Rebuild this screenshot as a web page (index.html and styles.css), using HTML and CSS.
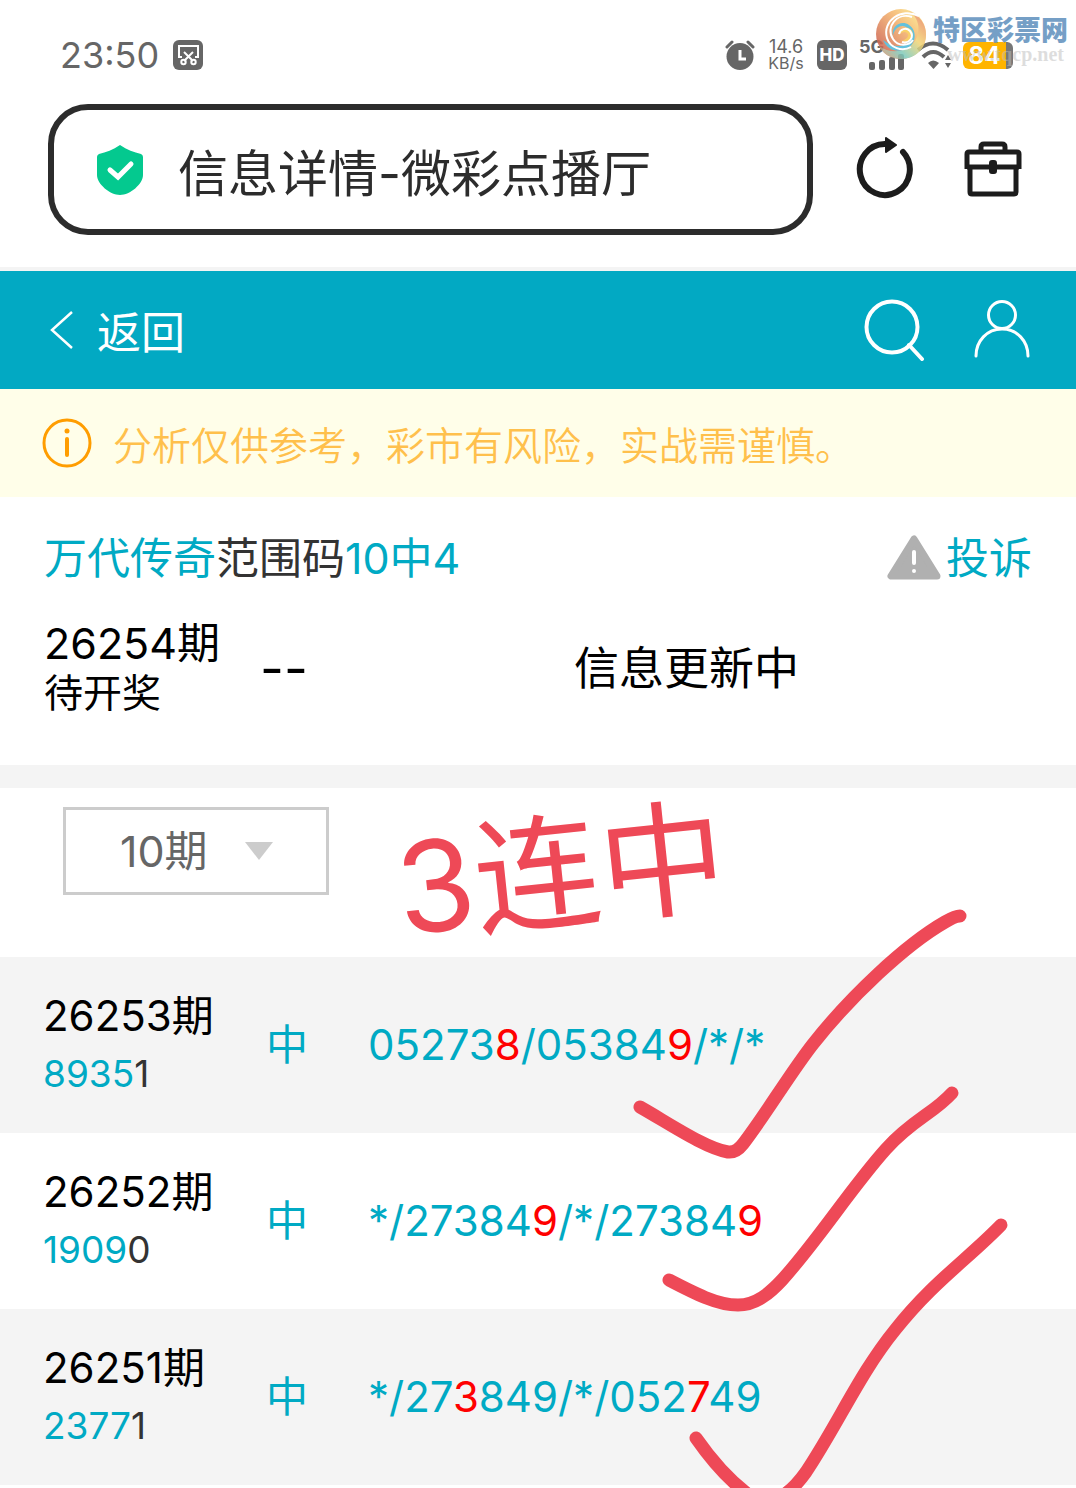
FILE: index.html
```html
<!DOCTYPE html>
<html lang="zh-CN">
<head>
    <meta charset="UTF-8">
    <meta name="viewport" content="width=device-width, initial-scale=1">
    <title>信息详情-微彩点播厅</title>
    <link rel="stylesheet" href="styles.css">
</head>
<body>
<div class="status">
    <span class="time">23:50</span>
    <svg class="cut" width="30" height="30" viewBox="0 0 30 30" fill="none" stroke="#fff" stroke-width="2">
        <rect width="30" height="30" rx="6" fill="#666" stroke="none"/>
        <path d="M9 17H6V6h19v11h-3M11 12l9 9M20 12l-9 9"/>
        <circle cx="10.500" cy="22" r="2.200"/>
        <circle cx="20.500" cy="22" r="2.200"/>
    </svg>
    <div class="signals">
        <svg width="30" height="30" viewBox="0 0 30 30">
            <circle cx="15" cy="16.500" r="13.500" fill="#666"/>
            <path d="M2 7l5-5M28 7l-5-5" stroke="#666" stroke-width="3" stroke-linecap="round"/>
            <path d="M15 10v9h6" fill="none" stroke="#fff" stroke-width="3"/>
        </svg>
        <span class="speed">14.6<small>KB/s</small></span>
        <span class="hd">HD</span>
        <div class="net">
            <b>5G</b>
            <svg width="36" height="16" viewBox="0 0 36 16" fill="#666">
                <rect y="8" width="6" height="8" rx="2"/>
                <rect x="10" y="6" width="6" height="10" rx="2"/>
                <rect x="20" y="3" width="6" height="13" rx="2"/>
                <rect x="29" width="6" height="16" rx="2"/>
            </svg>
        </div>
        <svg width="34" height="30" viewBox="0 0 34 30" fill="none" stroke="#666" stroke-width="4">
            <path d="M1 10q15-13 30 0M6 17q10-10 21 0"/>
            <path d="M11 23q5-5 11 0l-5.500 6z" fill="#666" stroke="none"/>
            <path d="M28 20l3-5 3 5zM28 23l3 5 3-5z" fill="#666" stroke="none"/>
        </svg>
        <span class="battery">84</span>
    </div>
</div>

<div class="watermark">
    <svg width="52" height="52" viewBox="0 0 52 52">
        <defs>
            <linearGradient id="ball" x1=".9" y1="0" x2="0" y2=".8">
                <stop offset="0" stop-color="#fbf08c"/>
                <stop offset=".4" stop-color="#f5b46a"/>
                <stop offset="1" stop-color="#c9584b"/>
            </linearGradient>
            <linearGradient id="leaf" x1="1" y1="0" x2="0" y2="1">
                <stop offset="0" stop-color="#e8745f"/>
                <stop offset=".4" stop-color="#f3d472"/>
                <stop offset=".7" stop-color="#7ccabc"/>
                <stop offset="1" stop-color="#f0895a"/>
            </linearGradient>
        </defs>
        <circle cx="26" cy="26" r="25" fill="url(#ball)"/>
        <path d="M33 3C45 7 51 16 51 27 51 41 40 51 26 51 16 51 8 46 4 38c12 9 29 6 36-5 7-12 3-25-7-30z" fill="url(#leaf)"/>
        <path d="M18 28C16 17 27 12 34 17c9 6 7 20-3 24-9 4-19 1-23-9 7 6 16 8 23 4 7-5 6-15 0-17-6-3-12 2-13 9z" fill="#48b7d6"/>
        <path d="M25 26c0-6 8-9 12-3 3 7-4 13-11 10 6-1 9-6 6-8-2-2-5-1-7 1z" fill="#f8c84e"/>
        <path d="M44 8C26-1 7 13 12 30c3 10 15 14 24 9M37 9C22 4 10 19 18 31c5 8 16 7 20 1M24 26c1-5 7-7 11-3 5 6-1 13-8 11" fill="none" stroke="#fff" stroke-width="2"/>
    </svg>
    <div>
        <p class="brand">特区彩票网</p>
        <p class="site">www.tqcp.net</p>
    </div>
</div>

<div class="browser">
    <div class="address">
        <svg width="48" height="50" viewBox="0 0 48 50">
            <path d="M24 0c7 5 14 7 21 9q2 1 2 3v18c0 9-13 20-23 20S1 39 1 30V12q0-2 2-3c7-2 14-4 21-9z" fill="#04c98f"/>
            <path d="M14 25l8 7 13-13" fill="none" stroke="#fff" stroke-width="5" stroke-linecap="round"/>
        </svg>
        <span>信息详情-微彩点播厅</span>
    </div>
    <button class="icon" aria-label="刷新">
        <svg width="60" height="66" viewBox="0 0 60 66">
            <path d="M48 15A25 25.500 0 1 1 30 7" fill="none" stroke="#1c1c1c" stroke-width="6" stroke-linecap="round"/>
            <path d="M31 1v14l10-7z" fill="#1c1c1c" stroke="#1c1c1c" stroke-width="2" stroke-linejoin="round"/>
        </svg>
    </button>
    <button class="icon" aria-label="工具箱">
        <svg width="58" height="58" viewBox="0 0 58 58" fill="none" stroke="#1c1c1c" stroke-width="5" stroke-linejoin="round">
            <path d="M3 28V13q0-2 2-2h48q2 0 2 2v15M17 11V6q0-3 3-3h18q3 0 3 3v5M3 26h52"/>
            <path d="M6 26v25q0 2 2 2h42q2 0 2-2V26"/>
            <rect x="26" y="20" width="6" height="12" rx="2" fill="#1c1c1c" stroke-width="2"/>
        </svg>
    </button>
</div>

<header>
    <a class="back" href="#">
        <svg width="26" height="40" viewBox="0 0 26 40" fill="none" stroke="#fff" stroke-width="2.500">
            <path d="M23 2L3 20l20 18"/>
        </svg>
        返回
    </a>
    <a href="#" aria-label="搜索">
        <svg width="62" height="62" viewBox="0 0 62 62" fill="none" stroke="#fff" stroke-width="4" stroke-linecap="round">
            <circle cx="29" cy="28" r="25.500"/>
            <path d="M46 46l13 14"/>
        </svg>
    </a>
    <a href="#" aria-label="我的">
        <svg width="58" height="62" viewBox="0 0 58 62" fill="none" stroke="#fff" stroke-width="3" stroke-linecap="round">
            <circle cx="29" cy="16" r="13.500"/>
            <path d="M3 57c0-15 11-27 26-27s26 12 26 27"/>
        </svg>
    </a>
</header>

<div class="notice">
    <svg width="50" height="50" viewBox="0 0 50 50" fill="none" stroke="#ff9d00" stroke-width="4">
        <circle cx="25" cy="25" r="23" stroke-width="3"/>
        <path d="M25 21v16" stroke-linecap="round"/>
        <circle cx="25" cy="13" r="2.500" fill="#ff9d00" stroke="none"/>
    </svg>
    分析仅供参考，彩市有风险，实战需谨慎。
</div>

<section class="plan">
    <div class="plan-title">
        <h1><span>万代传奇</span>范围码<span>10中4</span></h1>
        <a href="#">
            <svg width="54" height="46" viewBox="0 0 54 46">
                <path d="M27 4L4 41h46z" fill="#b0b0b0" stroke="#b0b0b0" stroke-width="7" stroke-linejoin="round"/>
                <path d="M27 17v11" stroke="#fff" stroke-width="4" stroke-linecap="round"/>
                <circle cx="27" cy="36" r="2" fill="#fff"/>
            </svg>
            投诉
        </a>
    </div>
    <div class="current">
        <div class="issue">26254期<small>待开奖</small></div>
        <div class="empty">--</div>
        <div>信息更新中</div>
    </div>
</section>

<section class="history">
    <div class="filter">
        <label class="period">
            <select aria-label="期数">
                <option>10期</option>
                <option>20期</option>
                <option>30期</option>
            </select>
        </label>
    </div>
    <table>
        <tr>
            <td>26253期<small><i>8935</i>1</small></td>
            <td>中</td>
            <td>05273<em>8</em>/05384<em>9</em>/*/*</td>
        </tr>
        <tr>
            <td>26252期<small><i>1909</i>0</small></td>
            <td>中</td>
            <td>*/27384<em>9</em>/*/27384<em>9</em></td>
        </tr>
        <tr>
            <td>26251期<small><i>2377</i>1</small></td>
            <td>中</td>
            <td>*/27<em>3</em>849/*/052<em>7</em>49</td>
        </tr>
    </table>
    <!-- 手写标记 -->
    <div class="streak">3连中</div>
    <svg class="ticks" width="1076" height="700" viewBox="0 0 1076 700" fill="none" stroke="#ee4957" stroke-width="13" stroke-linecap="round" stroke-linejoin="round">
        <path d="M640 319C670 336 705 360 728 364Q736 365 743 356C766 326 791 284 813 256C850 209 905 157 945 134Q955 128 960 128"/>
        <path d="M669 492C694 505 717 517 738 517C756 517 770 505 782 492C819 451 851 400 886 361C913 331 933 326 952 305"/>
        <path d="M696 650C712 673 733 696 753 710C772 718 789 708 806 684C838 636 860 585 895 542C933 494 968 471 1001 437"/>
    </svg>
</section>
</body>
</html>
```
FILE: styles.css
```css
* {
    margin: 0;
    padding: 0;
    box-sizing: border-box;
}

body {
    position: relative;
    background: #fff;
    color: #000;
    font-family: Inter, "Noto Sans CJK SC", sans-serif;
}

a {
    color: #00aac4;
    text-decoration: none;
}

svg {
    display: block;
    flex-shrink: 0;
}

i, em {
    font-style: normal;
}

small {
    display: block;
}

/* 状态栏 */
.status {
    display: flex;
    align-items: center;
    gap: 14px;
    height: 104px;
    padding: 6px 63px 0 60px;
    color: #666;
}

.time {
    font-size: 36px;
}

.signals {
    display: flex;
    align-items: center;
    gap: 12px;
    margin-left: auto;
}

.speed {
    width: 38px;
    font-size: 18px;
    line-height: 16px;
    text-align: center;
}

.speed small {
    font-size: 16px;
}

.hd {
    width: 30px;
    border-radius: 6px;
    background: #666;
    color: #fff;
    font-size: 17px;
    font-weight: 800;
    line-height: 30px;
    text-align: center;
}

.net b {
    display: block;
    font-size: 18px;
    line-height: 14px;
}

.net svg {
    margin-left: 10px;
}

.battery {
    width: 50px;
    border-right: 7px solid #777;
    border-radius: 6px;
    background: #ffb400;
    color: #fff;
    font-size: 24px;
    font-weight: 700;
    line-height: 27px;
    text-align: center;
}

.watermark {
    position: absolute;
    top: 8px;
    right: 8px;
    display: flex;
    gap: 6px;
    opacity: .85;
}

.brand {
    margin-top: 8px;
    color: #5d8fbd;
    font-size: 27px;
    font-weight: 900;
    line-height: 30px;
}

.site {
    padding-right: 4px;
    color: rgba(190, 190, 190, .6);
    font: bold 20px/16px "Liberation Serif", serif;
    text-align: right;
}

/* 地址栏 */
.browser {
    display: flex;
    align-items: center;
    padding: 0 54px 32px 48px;
    border-bottom: 4px solid #f4f4f4;
}

.address {
    display: flex;
    flex: 1;
    align-items: center;
    gap: 34px;
    height: 131px;
    padding-left: 42px;
    border: 6px solid #2c2c2c;
    border-radius: 40px;
    color: #2c2c2c;
    font-size: 50px;
}

.icon {
    border: 0;
    background: none;
    margin-left: 42px;
}

.icon + .icon {
    margin-left: 49px;
}

header {
    display: flex;
    align-items: center;
    gap: 48px;
    height: 118px;
    padding: 0 45px 0 49px;
    background: #02a9c3;
}

.back {
    display: flex;
    align-items: center;
    gap: 22px;
    margin-right: auto;
    color: #fff;
    font-size: 44px;
}

.notice {
    display: flex;
    align-items: center;
    gap: 21px;
    height: 108px;
    padding: 0 42px;
    background: #fffee9;
    color: #ffc04c;
    font-size: 39px;
    font-weight: 350;
}

/* 当前期 */
.plan {
    padding: 32px 44px 48px;
    border-bottom: 23px solid #f4f4f4;
}

.plan-title,
.plan-title a {
    display: flex;
    align-items: center;
    justify-content: space-between;
}

.plan-title {
    font-size: 43px;
    line-height: 58px;
}

.plan-title a {
    gap: 5px;
}

.plan-title h1 {
    color: #333;
    font-size: 43px;
    font-weight: 400;
}

.plan-title span {
    color: #00aac4;
}

.current {
    display: grid;
    grid-template-columns: 216px 314px 1fr;
    align-items: center;
    margin-top: 32px;
    font-size: 45px;
    line-height: 49px;
}

.issue {
    font-size: 43px;
}

.current small {
    font-size: 39px;
}

.empty {
    font-size: 52px;
}

/* 历史记录 */
.history {
    position: relative;
    padding-bottom: 3px;
}

.filter {
    padding: 19px 63px 62px;
}

.period {
    display: block;
    position: relative;
    width: 266px;
}

.period select {
    appearance: none;
    display: block;
    width: 100%;
    height: 88px;
    padding-left: 54px;
    border: 3px solid #ccc;
    border-radius: 0;
    background: #fff;
    color: #666;
    font-family: inherit;
    font-size: 43px;
}

.period::after {
    content: "";
    position: absolute;
    top: 35px;
    right: 56px;
    border: 14px solid transparent;
    border-top: 18px solid #ccc;
    border-bottom: 0;
    pointer-events: none;
}

table {
    width: 100%;
    border-collapse: collapse;
    table-layout: fixed;
}

tr:nth-child(odd) {
    background: #f4f4f4;
}

td {
    height: 176px;
    color: #00aac4;
    font-size: 42px;
    line-height: 58px;
    vertical-align: middle;
}

td:first-child {
    width: 266px;
    padding-left: 43px;
    color: #000;
}

td:nth-child(2) {
    width: 102px;
}

td small {
    color: #333;
    font-size: 37px;
}

td i {
    color: #00aac4;
}

td em {
    color: #f00;
}

.streak {
    position: absolute;
    top: 21px;
    left: 396px;
    color: #ee4957;
    font-size: 126px;
    line-height: 126px;
    transform: rotate(-6deg);
}

.ticks {
    position: absolute;
    top: 0;
    left: 0;
    pointer-events: none;
}
```
